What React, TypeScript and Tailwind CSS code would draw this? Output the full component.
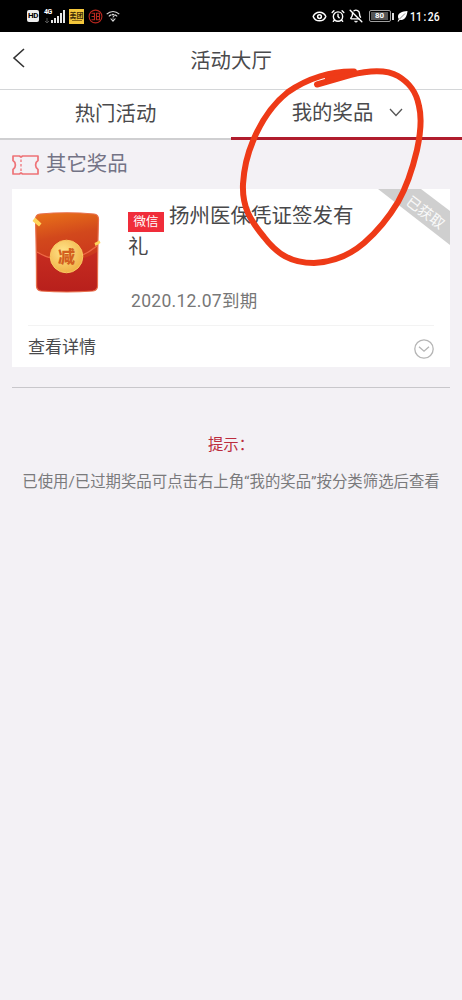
import React, { useState } from 'react';
import { AlarmClock, BellOff, Eye } from 'lucide-react';

const TABS = ['热门活动', '我的奖品'];

function StatusBar() {
  return (
    <div className="flex h-8 items-center justify-between bg-black pl-[27px] pr-[25px] text-white">
      <div className="flex items-center">
        <span className="flex h-[12px] w-[12px] items-center justify-center rounded-[2px] bg-[#eeeeee] text-[8px] font-bold leading-none tracking-[-0.5px] text-black">HD</span>
        <div className="relative ml-[5px] h-[15px] w-[21px]">
          <span className="absolute left-0 top-0 text-[7px] font-bold leading-[7px] tracking-[-0.5px]">4G</span>
          <svg className="absolute inset-0" width="21" height="15" viewBox="0 0 21 15" fill="none">
            <path d="M3 9v5M1 12l2 2 2-2" stroke="#555" strokeWidth="1" />
            <path d="M8 14v-3M11 14V9M14 14V7M17 14V4M20 14V1" stroke="#fff" strokeWidth="1.8" />
          </svg>
        </div>
        <span className="ml-[4px] flex h-[15px] w-[15px] flex-col items-center justify-center bg-[#f3c63b] text-[7px] font-bold leading-[8px] text-[#3c2a08]">
          美团
          <i className="h-px w-[10px] bg-[#8a6817]" />
        </span>
        <svg className="ml-[4px]" width="15" height="15" viewBox="0 0 15 15" fill="none" stroke="#b9281f" strokeWidth="1.1">
          <circle cx="7.5" cy="7.5" r="6.4" />
          <path d="M3.5 4.2h3v6.6h-3M3.5 7.5h3M8.5 4.2h3v6.6h-3zM8.5 7.5h3" />
        </svg>
        <svg className="ml-[3px]" width="14" height="12" viewBox="0 0 14 12" fill="none" stroke="#d5d5d5" strokeWidth="1.1">
          <path d="M.7 4.2c3.8-3.6 8.8-3.6 12.6 0M2.8 6.3c.9-.8 1.5-1.2 2.3-1.4M11.2 6.3c-.9-.8-1.5-1.2-2.3-1.4M4.6 8.5l2.4 2.6 2.4-2.6" />
          <path d="M5.8 5.3c.2-1.4 2.5-1.2 2.4.1C8.1 6.4 7 6.5 7 7.6M7 8.6v1" />
        </svg>
      </div>
      <div className="flex items-center">
        <Eye size={15} strokeWidth={2.4} />
        <AlarmClock className="ml-[4px]" size={14} strokeWidth={2.4} />
        <BellOff className="ml-[4px]" size={14} strokeWidth={2.4} />
        <div className="ml-[6px] flex h-[12px] w-[22px] items-center rounded-[2px] border border-[#a0a0a0] p-px">
          <span className="flex h-full w-[17px] items-center justify-center bg-[#555555] text-[8px] font-bold leading-none">80</span>
        </div>
        <i className="ml-[1px] h-[7px] w-[2px] bg-[#dddddd]" />
        <svg className="ml-[3px]" width="11" height="12" viewBox="0 0 11 12">
          <path d="M10.5 1C5 1.2.6 3.2 1 7.3c.1.8.5 1.4.9 1.8L.5 11.4h1.2l1.1-1.7c4.4 1.2 7-2.6 7.7-8.7z" fill="#fff" />
          <path d="M2.5 9L8 3.5" stroke="#333" strokeWidth=".6" />
        </svg>
        <span className="ml-[2px] flex w-[27px] origin-left scale-x-[0.8] items-center whitespace-nowrap text-[13px] font-medium leading-none">
          11<span className="px-[2px]">:</span>26
        </span>
      </div>
    </div>
  );
}

function TicketIcon() {
  return (
    <svg width="27" height="20" viewBox="0 0 27 20" fill="none" stroke="#ee7377" strokeWidth="1.7" strokeLinejoin="round">
      <path d="M1 1h6.500l1.500 1.200L10.500 1H26v4.500c-3.200 2-3.200 7 0 9V19H10.500L9 17.800 7.500 19H1v-4.500c3.200-2 3.200-7 0-9z" />
      <path d="M9 4.500v12" strokeWidth="1.3" strokeDasharray="2.5 2" />
    </svg>
  );
}

function RedPacket() {
  return (
    <svg width="72" height="84" viewBox="0 0 72 84">
      <defs>
        <linearGradient id="packet" x1="0" y1="0" x2="0.15" y2="1">
          <stop offset="0" stopColor="#ea7419" />
          <stop offset="0.35" stopColor="#d2481c" />
          <stop offset="1" stopColor="#c4281d" />
        </linearGradient>
        <linearGradient id="pocket" x1="0" y1="0" x2="0" y2="1">
          <stop offset="0" stopColor="#c62c20" />
          <stop offset="1" stopColor="#b8201c" />
        </linearGradient>
        <radialGradient id="coin" cx="0.4" cy="0.35" r="0.7">
          <stop offset="0" stopColor="#ffe58a" />
          <stop offset="1" stopColor="#f0ae42" />
        </radialGradient>
      </defs>
      <path d="M8 3Q35 .5 62 3q4.500.6 4.500 5-1 35-1 67 0 4.300-4.500 5-26 2-52 0-4.500-.7-4.500-5 0-32-1-67 0-4.400 4.500-5z" fill="url(#packet)" stroke="#e86f4c" strokeWidth="1.2" />
      <path d="M5 41q30 18 60 0-.3 17-.3 33.500 0 4-4 4.500-25.500 2-51 0-4-.5-4-4.500Q5.500 58 5 41z" fill="url(#pocket)" />
      <path d="M5 41q30 18 60-6" fill="none" stroke="#ee6844" strokeWidth="1.3" />
      <circle cx="34.5" cy="45.5" r="16.3" fill="url(#coin)" stroke="#f9c962" strokeWidth="1" />
      <text x="34.5" y="51.5" textAnchor="middle" fontSize="17" fontWeight="900" fill="#d3601e" fontFamily="'Noto Sans CJK SC', sans-serif">减</text>
      <path d="M3 6.500l6.500 6-2.500 3L.500 10z" fill="#ffd45c" />
      <path d="M62.500 32l5-2.500 1 2.500-5 3z" fill="#ffd45c" />
    </svg>
  );
}

function PrizeCard() {
  return (
    <div className="relative mx-3 h-[178px] overflow-hidden bg-white px-4">
      <div className="flex h-[137px] border-b border-[#f3f3f3]">
        <div className="mt-[22px] w-[72px] shrink-0 pl-[4px]">
          <RedPacket />
        </div>
        <div className="ml-[28px] flex w-[240px] flex-col">
          <div className="mt-[12px] text-[20.5px] leading-[30.5px] text-[#48484a]">
            <span className="mr-[5px] inline-flex h-[20px] w-[36px] items-center justify-center bg-[#f02d3a] align-[-3px] text-[12.5px] leading-none text-white">微信</span>
            扬州医保凭证签发有
            <br />礼
          </div>
          <div className="mt-[24px] pl-[3px] text-[17.5px] leading-7 tracking-[0.3px] text-[#777777]">2020.12.07到期</div>
        </div>
      </div>
      <button className="flex h-[41px] w-full items-center justify-between text-[17px] text-[#4a4a4c]">
        <span className="pt-[2px]">查看详情</span>
        <svg className="mt-[5px]" width="20" height="20" viewBox="0 0 20 20" fill="none" stroke="#b5b5b5" strokeWidth="1.3">
          <circle cx="10" cy="10" r="9.2" />
          <path d="M5 7.7l5 4.5 5-4.5" />
        </svg>
      </button>
      {/* Corner ribbon */}
      <svg className="absolute right-0 top-0" width="72" height="56" viewBox="0 0 72 56">
        <path d="M0 0h43l29 22v34z" fill="#cfcfcf" />
        <text x="47.5" y="28.7" transform="rotate(37 47.5 23.5)" textAnchor="middle" fontSize="14.5" fill="#fafafa" fontFamily="'Noto Sans CJK SC', sans-serif">已获取</text>
      </svg>
    </div>
  );
}

export default function App() {
  const [tab, setTab] = useState(1);

  return (
    <div className="relative h-[1000px] w-[462px] overflow-hidden bg-[#f3f1f5] font-[Roboto,'Noto_Sans_CJK_SC',sans-serif]">
      <StatusBar />

      {/* Header */}
      <div className="grid h-[58px] grid-cols-[60px_1fr_60px] items-center border-b border-[#d4d6d8] bg-white">
        <button className="pb-[5px] pl-[12px]">
          <svg width="14" height="20" viewBox="0 0 14 20" fill="none" stroke="#333" strokeWidth="1.6">
            <path d="M12 1L2 10l10 9" />
          </svg>
        </button>
        <h1 className="pt-px text-center text-[20.4px] text-[#4a4a4c]">活动大厅</h1>
      </div>

      {/* Tabs */}
      <div className="grid h-[50px] grid-cols-2 bg-white text-[20.4px] text-[#4a4a4c]">
        {TABS.map((label, i) => (
          <button
            key={label}
            onClick={() => setTab(i)}
            className={`flex items-center justify-center ${tab === i ? 'border-b-[3px] border-[#b01d2d]' : 'border-b-2 border-[#cfcfd1]'}`}
          >
            {label}
            {i === 1 && (
              <svg className="-mr-[2px] mb-[2px] ml-[16px]" width="14" height="9" viewBox="0 0 14 9" fill="none" stroke="#555" strokeWidth="1.3">
                <path d="M1 1l6 6.500L13 1" />
              </svg>
            )}
          </button>
        ))}
      </div>

      <div className="flex h-[49px] items-center gap-[7px] pl-[12px] text-[20.4px] text-[#737385]">
        <TicketIcon />
        <span className="-mt-px">其它奖品</span>
      </div>

      <PrizeCard />

      <hr className="mx-3 mt-[20px] border-[#c8c7cb]" />

      <div className="mt-[45px] text-center">
        <div className="text-[15.4px] leading-6 text-[#bc2c3d]">提示：</div>
        <p className="mt-[13px] whitespace-nowrap text-[15.4px] leading-6 text-[#7a7a7c]">已使用/已过期奖品可点击右上角“我的奖品”按分类筛选后查看</p>
      </div>

      {/* Hand-drawn marker */}
      <svg className="pointer-events-none absolute inset-0" width="462" height="1000" viewBox="0 0 462 1000" fill="none">
        <path
          d="M354 71.500C332 71 308 78 288 92C274 103 262 119 253 141C247 155 244 168 243 184C242 207 250 220 264 237C277 254 291 263 314 263C334 262 350 255 364 243C379 230 389 217 398 202C407 186 413 167 417 150C420 136 422 118 419 106C416 90 408 82 398 76C386 69 366 71 350 75L317 84.500"
          stroke="#ee3a17"
          strokeWidth="6"
          strokeLinecap="round"
          strokeLinejoin="round"
        />
        <path d="M325 79L352 73.500" stroke="#ee3a17" strokeWidth="4" />
      </svg>
    </div>
  );
}
